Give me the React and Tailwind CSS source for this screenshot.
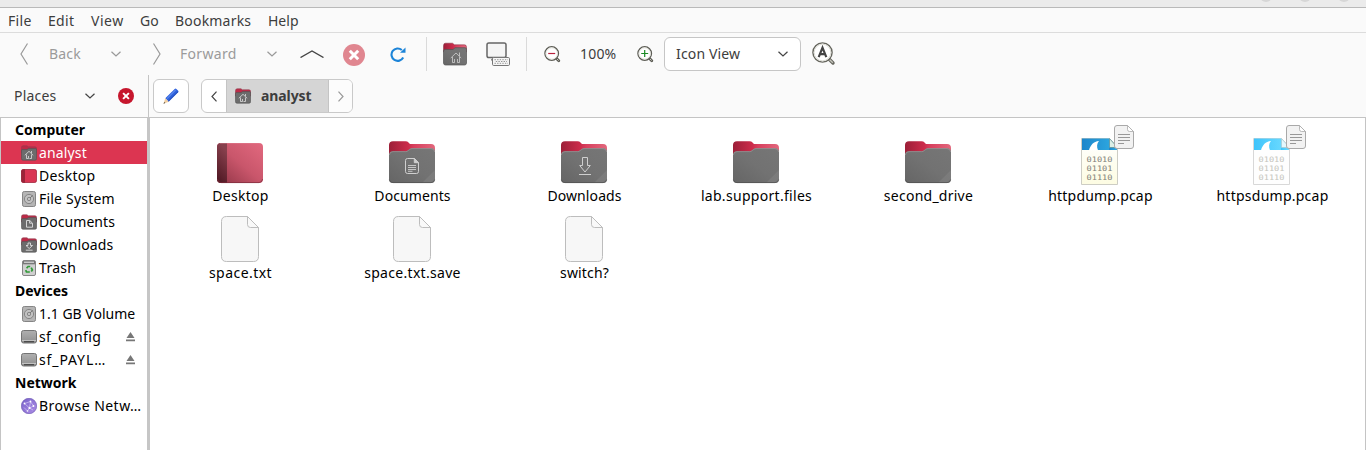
import React from "react";

const Chevron = ({ w = 10, h = 6, color = "#444", sw = 1.2, d = "M0.5 0.7L5 5L9.5 0.7" }) => (
  <svg width={w} height={h} viewBox={`0 0 ${w} ${h}`} className="block shrink-0" fill="none" stroke={color} strokeWidth={sw}>
    <path d={d} />
  </svg>
);

const Defs = () => (
  <svg width="0" height="0" className="absolute" aria-hidden="true">
    <defs>
      <linearGradient id="tab" x1="0" y1="0" x2="1" y2="0">
        <stop offset="0" stopColor="#9c1f38" />
        <stop offset="0.42" stopColor="#cc2c4b" />
        <stop offset="0.55" stopColor="#d8405e" />
        <stop offset="1" stopColor="#e2687d" />
      </linearGradient>
      <linearGradient id="front" x1="0" y1="1" x2="1" y2="0">
        <stop offset="0" stopColor="#656565" />
        <stop offset="0.5" stopColor="#727272" />
        <stop offset="1" stopColor="#767676" />
      </linearGradient>
      <linearGradient id="desk" x1="0" y1="1" x2="1" y2="0">
        <stop offset="0" stopColor="#8f3445" />
        <stop offset="0.5" stopColor="#c9566b" />
        <stop offset="1" stopColor="#e2697f" />
      </linearGradient>
      <linearGradient id="deskSide" x1="0" y1="1" x2="0.3" y2="0">
        <stop offset="0" stopColor="#4b1520" />
        <stop offset="1" stopColor="#87404d" />
      </linearGradient>
      <linearGradient id="drive" x1="0" y1="0" x2="0" y2="1">
        <stop offset="0" stopColor="#b0b0b0" />
        <stop offset="1" stopColor="#8f8f8f" />
      </linearGradient>
      <linearGradient id="net" x1="0" y1="0" x2="1" y2="1">
        <stop offset="0" stopColor="#7661c9" />
        <stop offset="1" stopColor="#ae8ee6" />
      </linearGradient>
      <linearGradient id="shark" x1="0" y1="0" x2="1" y2="0">
        <stop offset="0" stopColor="#1d86cb" />
        <stop offset="1" stopColor="#2fabe2" />
      </linearGradient>
      <linearGradient id="sharkLight" x1="0" y1="0" x2="1" y2="0">
        <stop offset="0" stopColor="#3fc4fb" />
        <stop offset="1" stopColor="#6fdcff" />
      </linearGradient>
      <linearGradient id="cream" x1="0" y1="0" x2="0" y2="1">
        <stop offset="0" stopColor="#ffffff" />
        <stop offset="1" stopColor="#fdfce2" />
      </linearGradient>
    </defs>
  </svg>
);

const Folder = ({ children }) => (
  <svg width="48" height="48" viewBox="0 0 48 48" className="block">
    <path d="M1 7Q1 3.2 5 3.2H17.5Q19.5 3.2 20.5 4.6L22 6H43Q47 6 47 10V22H1Z" fill="url(#tab)" />
    <path d="M1 17Q1 13.2 5 13.2H17.5Q19 13.2 20 12.2L21.6 11Q22.6 10.2 24 10.2H43Q47 10.2 47 14V41Q47 45 43 45H5Q1 45 1 41Z" fill="url(#front)" />
    <path d="M1.4 17Q1.4 13.6 5 13.6H17.7Q19.2 13.6 20.2 12.6L21.8 11.4Q22.8 10.6 24 10.6H43Q46.6 10.6 46.6 14" fill="none" stroke="#999" strokeWidth="0.7" />
    <path d="M47 32V41Q47 45 43 45H34Z" fill="#fff" opacity="0.07" />
    <path d="M1.4 41.5Q1.6 44.6 5 44.6H43Q46.4 44.6 46.6 41.5" fill="none" stroke="#505050" strokeWidth="0.8" />
    {children}
  </svg>
);

const DocGlyph = () => (
  <g fill="none" stroke="#cfcfcf" strokeWidth="1">
    <path d="M19.5 20.5H26.5L30.5 24.5V33.5Q30.5 35.5 28.5 35.5H19.5Q17.5 35.5 17.5 33.5V22.5Q17.5 20.5 19.5 20.5Z" />
    <path d="M26.3 20.5V24.7H30.5Z" fill="#cfcfcf" />
    <path d="M20 27.5H28M20 29.5H28M20 31.5H28M20 33.3H24.5" strokeWidth="0.9" />
  </g>
);

const DownGlyph = () => (
  <g fill="none" stroke="#cfcfcf" strokeWidth="1">
    <path d="M22.5 19.5H27.5V27.5H30.3L25 34L19.7 27.5H22.5Z" />
    <path d="M19 36.5H31" />
  </g>
);

const DesktopIcon = () => (
  <svg width="48" height="48" viewBox="0 0 48 48" className="block">
    <rect x="1" y="5" width="46" height="40" rx="4" fill="url(#desk)" />
    <path d="M11 5H5Q1 5 1 9V41Q1 45 5 45H11Z" fill="url(#deskSide)" />
    <path d="M1.5 41Q2 44.6 5 44.6H43Q46 44.6 46.6 41" fill="none" stroke="#7a2a3a" strokeWidth="0.7" />
    <path d="M4 5.4H44" stroke="#e6899a" strokeWidth="0.6" opacity="0.7" />
  </svg>
);

const PageIcon = () => (
  <svg width="48" height="48" viewBox="0 0 48 48" className="block">
    <path d="M10.5 1.5H31.5L42.5 12.5V41.5Q42.5 46.5 37.5 46.5H10.5Q5.500 46.5 5.500 41.500V6.500Q5.500 1.500 10.500 1.500Z" fill="#f7f7f7" stroke="#bdbdbd" />
    <path d="M31.500 1.500V9.500Q31.500 12.500 34.500 12.500H42.500Z" fill="#f9f9f9" stroke="#bdbdbd" />
  </svg>
);

const PcapIcon = ({ light }) => (
  <svg width="62" height="62" viewBox="0 0 62 62" className="block">
    <path d="M7.500 14.500H35.500L43.500 22.500V60.500H7.500Z" fill={light ? "#fefefe" : "url(#cream)"} stroke={light ? "#d8d8d8" : "#cdcdc4"} />
    <path d="M8 14.500H35L41 21V26H8Z" fill={light ? "url(#sharkLight)" : "url(#shark)"} />
    <path d="M35 23H43V26H35Z" fill={light ? "url(#sharkLight)" : "url(#shark)"} />
    <path d="M15 26.200C16.500 21 19.500 17.500 25 17C22.800 19.500 22.600 23 24 26.200Z" fill="#fff" />
    <path d="M35.500 14.500V23.500H43.500Z" fill={light ? "#e4f7fd" : "#dcefe6"} stroke={light ? "#a9c8d0" : "#5c8d91"} strokeWidth="0.7" />
    <g fill={light ? "#c4c4bc" : "#7f7f78"} fontFamily="'DejaVu Sans Mono', monospace" fontSize="7.500">
      <text x="12.500" y="37.500" textLength="26" lengthAdjust="spacingAndGlyphs">01010</text>
      <text x="12.500" y="46.500" textLength="26" lengthAdjust="spacingAndGlyphs">01101</text>
      <text x="12.500" y="55.500" textLength="26" lengthAdjust="spacingAndGlyphs">01110</text>
    </g>
    <path d="M43 1.500H53.500L59.500 7.500V22Q59.500 24.500 57 24.500H43Q40.500 24.500 40.500 22V4Q40.500 1.500 43 1.500Z" fill="#f2f2f2" stroke="#a9a9a9" />
    <path d="M53.500 1.500V5.500Q53.500 7.500 55.500 7.500H59.500Z" fill="#fff" stroke="#a9a9a9" strokeWidth="0.800" />
    <path d="M44 10.500H56M44 13.500H56M44 16.500H56M44 19.500H50" stroke="#989898" strokeWidth="1" />
  </svg>
);

const SmallFolder = ({ kind, size = 16 }) => (
  <svg width={size} height={size} viewBox="0 0 16 16" className="block shrink-0">
    <path d="M0.500 2.500Q0.500 0.800 2.200 0.800H6L7.300 1.800H14Q15.600 1.800 15.600 3.400V8H0.500Z" fill="#bd2a47" stroke="#8d4050" strokeWidth="0.600" />
    <path d="M0.500 5.500Q0.500 4.600 1.500 4.600H6L7.500 3.600H14.500Q15.600 3.600 15.600 4.700V13.700Q15.600 15.200 14 15.200H2Q0.500 15.200 0.500 13.700Z" fill="#6c6c6c" stroke="#515151" strokeWidth="0.600" />
    <g fill="none" stroke="#e0e0e0" strokeWidth="0.900">
      {kind === "home" && <path d="M3.800 10.300L8 6.300L12.200 10.300M5.500 9.500V13.500H7.500M8.500 13.500H10.500V9.500M7.500 13.500V11M10.500 6V8" strokeWidth="0.800" />}
      {kind === "doc" && <path d="M5.500 6.500H8.800L11.500 9.200V13.200H5.500ZM8.600 6.700V9.200H11.200" />}
      {kind === "down" && <path d="M7 6H9.500V8.500H11.500L8.200 11.500L5 8.500H7ZM4.800 13.200H11.600" />}
    </g>
  </svg>
);

const HomeFolder = () => (
  <svg width="24" height="24" viewBox="0 0 24 24" className="block shrink-0">
    <path d="M0.500 3.500Q0.500 1.200 2.500 1.200H9.500L11.500 2.800H21.500Q23.500 2.800 23.500 5V10H0.500Z" fill="url(#tab)" stroke="#7e263a" strokeWidth="0.500" />
    <path d="M0.500 9Q0.500 7.500 2 7.500H10L12 5.700H22Q23.500 5.700 23.500 7.200V21Q23.500 23 21.500 23H2.500Q0.500 23 0.500 21Z" fill="url(#front)" stroke="#535353" strokeWidth="0.700" />
    <path d="M7.800 16L13 11L18.200 16M9.500 15V20.500H11.500V17M14.500 17V20.500H16.500V15M16.500 10.500V14" fill="none" stroke="#d0d0d0" strokeWidth="0.800" />
  </svg>
);

const SideIcon = ({ kind }) => {
  if (kind === "home" || kind === "doc" || kind === "down") return <SmallFolder kind={kind} />;
  return (
    <svg width="16" height="16" viewBox="0 0 16 16" className="block shrink-0">
      {kind === "desktop" && (
        <g>
          <rect x="0.300" y="1.300" width="15.400" height="13.400" rx="2" fill="#d93653" />
          <path d="M4 1.300H2.300Q0.300 1.300 0.300 3.300V12.700Q0.300 14.700 2.300 14.700H4Z" fill="#9c2439" />
          <rect x="0.500" y="1.500" width="15" height="13" rx="2" fill="none" stroke="#8d2639" strokeWidth="0.600" />
        </g>
      )}
      {kind === "disk" && (
        <g fill="none">
          <rect x="1.500" y="0.500" width="13" height="15" rx="1.800" fill="#b5b5b5" stroke="#858585" />
          <circle cx="8" cy="8" r="4.600" stroke="#777" strokeWidth="0.800" fill="#c2c2c2" />
          <circle cx="8" cy="8" r="1.700" stroke="#777" strokeWidth="0.800" />
          <path d="M9 7L11.800 4.300" stroke="#777" />
        </g>
      )}
      {kind === "trash" && (
        <g>
          <rect x="1.500" y="0.500" width="13" height="15" rx="1.500" fill="#cfcfcf" stroke="#858585" />
          <rect x="2" y="1" width="12" height="3.300" fill="#777" />
          <path d="M3 2.200H13" stroke="#eee" strokeWidth="1" />
          <g fill="none" stroke="#2f9a36" strokeWidth="1.700">
            <path d="M5.600 8.200L7.100 6.500H9.200" />
            <path d="M10.200 7.700L11.400 10L10.300 11.500" />
            <path d="M8.800 12H5.500L4.700 10.200" />
          </g>
        </g>
      )}
      {kind === "drive" && (
        <g>
          <rect x="0.500" y="1.500" width="15" height="12.500" rx="2" fill="url(#drive)" stroke="#747474" />
          <path d="M1 11.500H15" stroke="#d6d6d6" strokeWidth="0.700" />
          <path d="M3 12.700H13" stroke="#444" strokeWidth="1.200" />
        </g>
      )}
      {kind === "net" && (
        <g>
          <circle cx="8" cy="8" r="7.700" fill="url(#net)" stroke="#6650ae" strokeWidth="0.600" />
          <path d="M3.500 5.500L9.500 3.500L12.500 8L8.500 10L3.500 5.500M9.500 3.500L8.500 10L6.500 13L3 9.500M8.500 10L12 12" fill="none" stroke="#ddd2fa" strokeWidth="0.600" />
          <g fill="#fff">
            <circle cx="3.500" cy="5.500" r="0.900" /><circle cx="9.500" cy="3.500" r="0.900" /><circle cx="12.500" cy="8" r="0.900" />
            <circle cx="8.500" cy="10" r="1.100" /><circle cx="6.500" cy="13" r="0.800" />
          </g>
        </g>
      )}
    </svg>
  );
};

const CloseDot = ({ r, color, arm, sw }) => (
  <svg width={r * 2} height={r * 2} viewBox={`${-r} ${-r} ${2 * r} ${2 * r}`} className="block shrink-0">
    <circle r={r} fill={color} />
    <path d={`M${-arm} ${-arm}L${arm} ${arm}M${arm} ${-arm}L${-arm} ${arm}`} stroke="#fff" strokeWidth={sw} />
  </svg>
);

const Magnifier = ({ plus }) => (
  <svg width="17" height="17" viewBox="0 0 17 17" className="block shrink-0" fill="none">
    <path d="M12 12L14.800 14.800" stroke="#5c5c55" strokeWidth="2.800" strokeLinecap="round" />
    <path d="M12.400 12.400L14.600 14.600" stroke="#c9c9c0" strokeWidth="1" />
    <circle cx="7.700" cy="7.500" r="6.800" fill="#fff" stroke="#5d5d56" strokeWidth="1.300" />
    <circle cx="7.700" cy="7.500" r="5.700" stroke="#ddddd6" strokeWidth="0.800" />
    <path d={plus ? "M4.200 7.500H11.200M7.700 4V11" : "M4.200 7.500H11.200"} stroke={plus ? "#1a8a24" : "#b8203c"} strokeWidth="1.200" />
  </svg>
);

const menu = [
  ["File", "w-[40px] tracking-[0.3px]"],
  ["Edit", "w-[43px] tracking-[0.3px]"],
  ["View", "w-[49px] tracking-[0.5px]"],
  ["Go", "w-[35px]"],
  ["Bookmarks", "w-[93px] tracking-[0.2px]"],
  ["Help", "w-[40px]"],
];

const places = [
  { head: "Computer" },
  { name: "analyst", icon: "home", active: true, track: "tracking-[0.15px]" },
  { name: "Desktop", icon: "desktop", track: "tracking-[0.3px]" },
  { name: "File System", icon: "disk", track: "tracking-[0.2px]" },
  { name: "Documents", icon: "doc", track: "tracking-[0.05px]" },
  { name: "Downloads", icon: "down", track: "tracking-[0.1px]" },
  { name: "Trash", icon: "trash", track: "tracking-[0.3px]" },
  { head: "Devices" },
  { name: "1.1 GB Volume", icon: "disk", track: "tracking-[0px]" },
  { name: "sf_config", icon: "drive", eject: true, track: "tracking-[0.4px]" },
  { name: "sf_PAYL…", icon: "drive", eject: true, track: "tracking-[0.9px]" },
  { head: "Network" },
  { name: "Browse Netw…", icon: "net", track: "tracking-[0.45px]" },
];

const files = [
  ["Desktop", <DesktopIcon />, "tracking-[0.3px]"],
  ["Documents", <Folder><DocGlyph /></Folder>, "tracking-[0.1px]"],
  ["Downloads", <Folder><DownGlyph /></Folder>, "tracking-[0.1px]"],
  ["lab.support.files", <Folder />, "tracking-[0.3px]"],
  ["second_drive", <Folder />, "tracking-[0.25px]"],
  ["httpdump.pcap", <div className="-mt-[14px] ml-[10px] h-[62px]"><PcapIcon /></div>, "tracking-[0.2px]"],
  ["httpsdump.pcap", <div className="-mt-[14px] ml-[10px] h-[62px]"><PcapIcon light /></div>, "tracking-[0.25px]"],
  ["space.txt", <PageIcon />, "tracking-[0.45px]"],
  ["space.txt.save", <PageIcon />, "tracking-[0.3px]"],
  ["switch?", <PageIcon />, "tracking-[0.15px]"],
];

export default function App() {
  return (
    <div className="flex h-[450px] w-[1366px] flex-col overflow-hidden bg-[#fafafa] font-['Noto_Sans',sans-serif] text-[14px] leading-5 text-[#3d3d3d]">
      <Defs />
      <div className="flex h-2 shrink-0 justify-end gap-[27px] overflow-hidden border-b border-[#b9b9b9] bg-[#ebebeb] pr-[16px]">
        {[0, 1, 2].map((i) => (
          <div key={i} className="-mt-[10px] h-3 w-3 rounded-full bg-[#d6d6d6]" />
        ))}
      </div>
      <div className="flex h-[25px] shrink-0 items-center border-b border-[#dcdcdc] pl-2 pt-px">
        {menu.map(([t, c]) => (
          <span key={t} className={c}>{t}</span>
        ))}
      </div>

      <div className="flex h-[42px] shrink-0 items-center pl-5">
        <Chevron w={8} h={22} color="#999" d="M7.500 0.500L1 11L7.500 21.500" />
        <span className="ml-[21px] w-[62px] text-[#9a9a9a] tracking-[0.2px]">Back</span>
        <Chevron color="#999" />
        <div className="ml-[32px]"><Chevron w={8} h={22} color="#999" d="M0.500 0.500L7 11L0.500 21.500" /></div>
        <span className="ml-[19px] w-[87px] text-[#9a9a9a] tracking-[0.3px]">Forward</span>
        <Chevron color="#999" />
        <div className="ml-[23px] -mt-px"><Chevron w={24} h={8} sw={1.400} d="M0.500 7.500L12 1L23.500 7.500" /></div>
        <div className="ml-[19px] mt-[2px]"><CloseDot r={11} color="#e08690" arm={4.200} sw={3} /></div>
        <svg width="17" height="17" viewBox="0 0 17 17" className="ml-[25px] block" fill="none">
          <path d="M13.200 11.500A6.200 6.200 0 1 1 11.800 4" stroke="#1c84d8" strokeWidth="2.100" />
          <path d="M15.500 1.500V6.800H10Z" fill="#1c84d8" />
        </svg>
        <div className="ml-[19px] h-[34px] w-px bg-[#dadada]" />
        <div className="ml-[16px]"><HomeFolder /></div>
        <svg width="25" height="25" viewBox="0 0 25 25" className="ml-[19px] block" fill="none">
          <rect x="1" y="1" width="19" height="14.500" rx="1.800" fill="#f5f5f5" stroke="#666" strokeWidth="1.500" />
          <path d="M5.500 18.500Q5 16.700 7 16.700" stroke="#777" />
          <rect x="6.500" y="15.500" width="17" height="8" rx="1.200" fill="#f6f6f6" stroke="#777" />
          <path d="M8.500 17.700H22M9.800 19.500H21M8.500 21.300H22" stroke="#8a8a8a" strokeWidth="0.900" strokeDasharray="1.400 1.200" />
        </svg>
        <div className="ml-[15px] h-[34px] w-px bg-[#dadada]" />
        <div className="ml-[17px]"><Magnifier /></div>
        <span className="ml-[19px] w-[57px] tracking-[0.2px]">100%</span>
        <Magnifier plus />
        <div className="ml-[10px] flex h-[34px] w-[137px] items-center justify-between rounded-md border border-[#c6c6c6] bg-white pl-[11px] pr-[12px]">
          <span className="tracking-[0.15px]">Icon View</span>
          <Chevron />
        </div>
        <svg width="24" height="24" viewBox="0 0 24 24" className="ml-[11px] block" fill="none">
          <path d="M17 17L21 21" stroke="#66665e" strokeWidth="3.400" strokeLinecap="round" />
          <path d="M17.500 17.500L20.800 20.800" stroke="#c5c5bb" strokeWidth="1.400" />
          <circle cx="10.500" cy="10.500" r="9.600" fill="#fff" stroke="#66665e" strokeWidth="1.400" />
          <circle cx="10.500" cy="10.500" r="8.300" stroke="#ddddd6" />
          <path d="M6.700 15.200L10.500 5.700L14.300 15.200M8 12.200H13" stroke="#444" strokeWidth="2.200" />
        </svg>
      </div>

      <div className="flex h-[42px] shrink-0 items-stretch">
        <div className="flex w-[149px] items-center border-r border-[#c4c4c4] pl-[14px]">
          <span className="w-[71px] tracking-[0.2px]">Places</span>
          <Chevron sw={1.200} />
          <div className="ml-[23px]"><CloseDot r={8} color="#c6162d" arm={2.900} sw={2} /></div>
        </div>
        <div className="flex items-center pl-1">
          <div className="flex h-[34px] w-9 items-center justify-center rounded-md border border-[#c9c9c9] bg-white">
            <svg width="18" height="18" viewBox="0 0 18 18" className="block">
              <path d="M3.300 11.300L12.700 1.900Q13.500 1.200 14.400 2L16.200 3.700Q16.900 4.400 16.200 5.200L6.700 14.700Z" fill="#2f62dc" />
              <path d="M5 11.600L13.700 2.900" stroke="#5d8af0" strokeWidth="1.100" />
              <path d="M3.300 11.300L6.700 14.700L1.500 16.800Z" fill="#f1cfa2" />
              <path d="M2.300 15.100L3.300 16L1.500 16.800Z" fill="#444" />
              <path d="M6.300 14.200L16 4.600" stroke="#1e43a9" strokeWidth="0.800" />
            </svg>
          </div>
          <div className="ml-3 flex h-[34px] w-[152px] overflow-hidden rounded-md border border-[#c9c9c9] bg-white">
            <div className="flex w-[24px] items-center justify-center"><Chevron w={6} h={11} d="M5.500 0.700L1 5.500L5.500 10.300" /></div>
            <div className="flex w-[103px] items-center border-x border-[#c4c4c4] bg-[#d5d5d5] pl-2">
              <SmallFolder kind="home" />
              <span className="ml-[10px] font-bold tracking-[-0.1px]">analyst</span>
            </div>
            <div className="flex flex-1 items-center justify-center bg-[#fcfcfc]"><Chevron w={6} h={11} color="#999" d="M0.500 0.700L5 5.500L0.500 10.300" /></div>
          </div>
        </div>
      </div>

      <div className="flex min-h-0 flex-1 border-l border-t border-[#c4c4c4] text-black">
        <div className="w-[146px] shrink-0 bg-white">
          {places.map((p) =>
            p.head ? (
              <div key={p.head} className="flex h-[23px] items-center pl-[14px] font-bold">{p.head}</div>
            ) : (
              <div key={p.name} className={p.active ? "flex h-[23px] items-center bg-[#dc3551] pl-5 text-white" : "flex h-[23px] items-center pl-5"}>
                <SideIcon kind={p.icon} />
                <span className={"ml-[2px] flex-1 whitespace-nowrap " + p.track}>{p.name}</span>
                {p.eject && (
                  <svg width="9" height="10" viewBox="0 0 9 10" className="mr-[12px] block" fill="#777">
                    <path d="M4.500 0L8.500 6H0.500ZM0 7.500H9V9.200H0Z" />
                  </svg>
                )}
              </div>
            )
          )}
        </div>
        <div className="w-[3px] shrink-0 bg-[#c6c6c6]" />
        <div className="grid flex-1 auto-rows-[77px] grid-cols-[repeat(7,172px)] content-start border-r border-[#c4c4c4] bg-white pl-1 pt-5">
          {files.map(([name, icon, track]) => (
            <div key={name} className="flex flex-col items-center">
              {icon}
              <span className={"ml-px whitespace-nowrap " + track}>{name}</span>
            </div>
          ))}
        </div>
      </div>
    </div>
  );
}
